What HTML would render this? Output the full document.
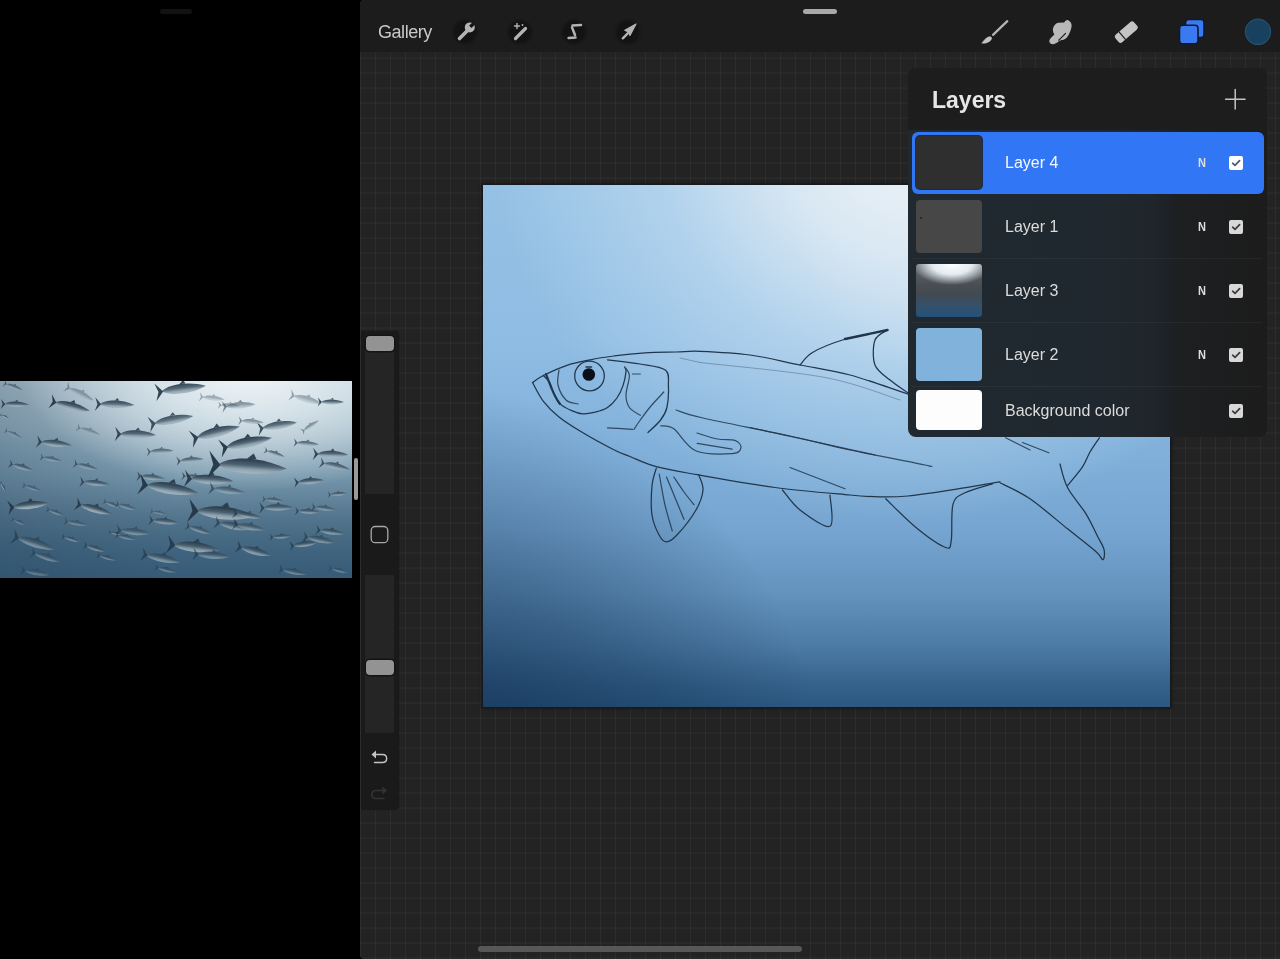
<!DOCTYPE html>
<html><head><meta charset="utf-8">
<style>
*{margin:0;padding:0;box-sizing:border-box}
html,body{width:1280px;height:959px;overflow:hidden;background:#000;font-family:"Liberation Sans",sans-serif}
#app,#layers{will-change:transform}
.abs{position:absolute}
#lefthandle{left:160px;top:9px;width:32px;height:5px;border-radius:3px;background:#121212}
#photo{left:0;top:381px;width:352px;height:197px;overflow:hidden;
 background:radial-gradient(ellipse 230px 120px at 250px -10px,#f1f5f6 0%,rgba(225,235,240,.85) 35%,rgba(180,200,212,0) 100%),linear-gradient(90deg,rgba(40,70,95,.3) 0%,rgba(40,70,95,.12) 30%,rgba(40,70,95,0) 50%),linear-gradient(180deg,#b3c8d3 0%,#98b2c1 25%,#7596ab 48%,#52748c 70%,#40647f 86%,#365b78 100%)}
#divider{left:354px;top:458px;width:4px;height:42px;border-radius:2px;background:#9a9a9a}
#app{left:360px;top:0;width:920px;height:959px;border-radius:4px 0 0 4px;overflow:hidden;
 background-color:#232323;
 background-image:linear-gradient(90deg,rgba(255,255,255,.042) 0px,rgba(255,255,255,.042) 1.5px,rgba(255,255,255,0) 1.5px),linear-gradient(180deg,rgba(255,255,255,.042) 0px,rgba(255,255,255,.042) 1.5px,rgba(255,255,255,0) 1.5px);
 background-size:15px 15px;
 background-position:0px 12.6px}
#toolbar{left:0;top:0;width:920px;height:52px;background:#1c1c1c}
#gallery{left:18px;top:22px;font-size:18px;color:#c8c8c8;letter-spacing:-0.45px}
.icirc{width:28px;height:28px;border-radius:50%;background:radial-gradient(circle,#131313 50%,rgba(19,19,19,0) 71%)}
#righthandle{left:443px;top:9px;width:34px;height:5px;border-radius:3px;background:#a8a8a8}
#home{left:118px;top:946px;width:324px;height:6px;border-radius:3px;background:#575757}
#canvas{left:123px;top:185px;width:687px;height:522px;overflow:hidden;box-shadow:0 0 0 1px #161a1f, 0 0 3px 1px rgba(0,0,0,.6);
 background:
 radial-gradient(ellipse 410px 390px at 420px -50px,rgba(238,243,247,1) 0%,rgba(226,237,245,.86) 30%,rgba(205,228,244,.5) 60%,rgba(170,205,235,0) 100%),
 radial-gradient(ellipse 260px 260px at 560px -20px,rgba(232,238,242,.9) 0%,rgba(220,232,240,.5) 45%,rgba(200,220,235,0) 100%),
 radial-gradient(ellipse 400px 400px at -60px 600px,rgba(20,50,85,.85) 0%,rgba(20,50,85,.45) 50%,rgba(20,50,85,0) 100%),
 linear-gradient(180deg,#95c1e5 0%,#8fbce3 30%,#80b0da 52%,#75a5d0 66%,#6494be 78%,#4d7ca6 88%,#34618a 96%,#2b5880 100%)}
#sidebar{left:1px;top:331px;width:36.5px;height:478.5px;background:#1a1a1a;border-radius:0 4px 4px 0;box-shadow:1px 0 1px rgba(0,0,0,.35)}
.track{left:4px;width:29px;background:#252525;border-radius:1px}
.knob{left:4.5px;width:28px;height:15px;border-radius:4px;background:#939393;box-shadow:0 0 0 1.5px #141414}
#layers{left:548px;top:68px;width:359px;height:369px;border-radius:8px;overflow:hidden}
#lrows{left:0;top:62px;width:359px;height:307px;background:linear-gradient(90deg,#212930 0%,#20282f 50%,#1f252b 68%,#1d1f21 76%,#1c1c1c 100%)}
#lhead{left:0;top:0;width:359px;height:62px;background:rgba(29,29,29,.9)}
#ltitle{left:24px;top:19px;font-size:23px;font-weight:bold;color:#e6e6e6}
.row{left:4px;width:352px;height:62px}
.row.sel{background:#3176f5;border-radius:6px}
.thumb{left:4px;top:4px;width:66px;height:53px;border-radius:4px}
.lname{left:93px;top:22px;font-size:16px;color:#dcdcdc}
.lN{left:286px;top:24px;font-size:12px;font-weight:bold;color:#dedede;transform:scaleX(.92);transform-origin:left}
.cb{left:317px;top:24px;width:14px;height:14px;border-radius:2px;background:#d8d8d8}
.sep{left:4px;width:350px;height:1px;background:rgba(255,255,255,.045)}
</style></head><body>
<div id="lefthandle" class="abs"></div>
<div id="photo" class="abs"><svg class="abs" style="left:0;top:0" width="352" height="197" viewBox="0 0 352 197">
<defs><linearGradient id="fg" x1="0" y1="0" x2="0" y2="1"><stop offset="0" stop-color="#223444"/><stop offset=".45" stop-color="#4a5f6e"/><stop offset=".72" stop-color="#8ea2ae"/><stop offset="1" stop-color="#a9b9c3"/></linearGradient><g id="tf"><path d="M15 0 C28 -13 70 -14 100 -1 C74 11 32 11 15 0 Z" fill="url(#fg)"/><path d="M18 0 L3 -17 L9 0 L3 17 Z" fill="#243646"/><path d="M50 -10 L58 -17 L62 -10 Z" fill="#2a3c4c"/></g></defs>
<use href="#tf" transform="translate(49.0 19.9) rotate(14.3) scale(0.420)" opacity="0.95"/>
<use href="#tf" transform="translate(0.0 23.0) rotate(2.0) scale(0.292)" opacity="0.87"/>
<use href="#tf" transform="translate(0.0 33.4) rotate(24.1) scale(0.103)" opacity="0.87"/>
<use href="#tf" transform="translate(35.5 60.5) rotate(6.6) scale(0.367)" opacity="0.83"/>
<use href="#tf" transform="translate(93.8 23.0) rotate(2.1) scale(0.407)" opacity="0.87"/>
<use href="#tf" transform="translate(8.3 82.4) rotate(16.2) scale(0.261)" opacity="0.71"/>
<use href="#tf" transform="translate(39.6 76.0) rotate(11.1) scale(0.223)" opacity="0.59"/>
<use href="#tf" transform="translate(73.0 82.4) rotate(14.1) scale(0.258)" opacity="0.67"/>
<use href="#tf" transform="translate(4.2 49.0) rotate(25.4) scale(0.196)" opacity="0.47"/>
<use href="#tf" transform="translate(113.7 53.0) rotate(1.8) scale(0.422)" opacity="0.87"/>
<use href="#tf" transform="translate(64.7 5.0) rotate(27.1) scale(0.327)" opacity="0.39"/>
<use href="#tf" transform="translate(76.0 46.0) rotate(18.4) scale(0.253)" opacity="0.39"/>
<use href="#tf" transform="translate(3.0 2.0) rotate(20.3) scale(0.213)" opacity="0.63"/>
<use href="#tf" transform="translate(153.8 11.5) rotate(-6.8) scale(0.526)" opacity="0.91"/>
<use href="#tf" transform="translate(147.5 43.8) rotate(-10.2) scale(0.466)" opacity="0.83"/>
<use href="#tf" transform="translate(189.3 58.4) rotate(-13.7) scale(0.522)" opacity="0.91"/>
<use href="#tf" transform="translate(146.0 71.0) rotate(-2.1) scale(0.276)" opacity="0.63"/>
<use href="#tf" transform="translate(175.7 80.3) rotate(-4.3) scale(0.282)" opacity="0.71"/>
<use href="#tf" transform="translate(206.0 83.0) rotate(4.0) scale(0.809)" opacity="0.95"/>
<use href="#tf" transform="translate(218.4 67.8) rotate(-11.0) scale(0.546)" opacity="0.95"/>
<use href="#tf" transform="translate(198.6 15.7) rotate(6.8) scale(0.263)" opacity="0.39"/>
<use href="#tf" transform="translate(217.4 24.0) rotate(2.5) scale(0.226)" opacity="0.43"/>
<use href="#tf" transform="translate(136.0 95.0) rotate(5.9) scale(0.292)" opacity="0.71"/>
<use href="#tf" transform="translate(181.0 95.0) rotate(4.6) scale(0.251)" opacity="0.71"/>
<use href="#tf" transform="translate(221.0 26.0) rotate(-4.1) scale(0.346)" opacity="0.51"/>
<use href="#tf" transform="translate(317.0 21.0) rotate(0.8) scale(0.270)" opacity="0.87"/>
<use href="#tf" transform="translate(288.8 13.6) rotate(15.8) scale(0.345)" opacity="0.39"/>
<use href="#tf" transform="translate(256.5 48.0) rotate(-8.7) scale(0.410)" opacity="0.83"/>
<use href="#tf" transform="translate(237.7 39.7) rotate(4.6) scale(0.262)" opacity="0.51"/>
<use href="#tf" transform="translate(301.3 51.0) rotate(-32.6) scale(0.210)" opacity="0.51"/>
<use href="#tf" transform="translate(293.0 61.6) rotate(4.6) scale(0.261)" opacity="0.71"/>
<use href="#tf" transform="translate(311.8 73.0) rotate(1.6) scale(0.365)" opacity="0.87"/>
<use href="#tf" transform="translate(263.8 69.0) rotate(18.5) scale(0.220)" opacity="0.71"/>
<use href="#tf" transform="translate(319.0 81.4) rotate(13.3) scale(0.318)" opacity="0.75"/>
<use href="#tf" transform="translate(6.6 126.9) rotate(-5.9) scale(0.429)" opacity="0.95"/>
<use href="#tf" transform="translate(21.9 103.9) rotate(18.3) scale(0.207)" opacity="0.51"/>
<use href="#tf" transform="translate(78.9 100.6) rotate(6.2) scale(0.308)" opacity="0.75"/>
<use href="#tf" transform="translate(74.5 122.5) rotate(16.3) scale(0.388)" opacity="0.91"/>
<use href="#tf" transform="translate(46.0 128.0) rotate(20.4) scale(0.187)" opacity="0.59"/>
<use href="#tf" transform="translate(63.5 140.0) rotate(10.3) scale(0.245)" opacity="0.51"/>
<use href="#tf" transform="translate(103.0 120.0) rotate(22.4) scale(0.184)" opacity="0.63"/>
<use href="#tf" transform="translate(11.0 155.0) rotate(17.7) scale(0.462)" opacity="0.63"/>
<use href="#tf" transform="translate(30.0 171.0) rotate(18.4) scale(0.316)" opacity="0.55"/>
<use href="#tf" transform="translate(61.3 155.3) rotate(16.4) scale(0.195)" opacity="0.63"/>
<use href="#tf" transform="translate(83.2 164.0) rotate(17.1) scale(0.228)" opacity="0.63"/>
<use href="#tf" transform="translate(96.4 174.0) rotate(15.4) scale(0.203)" opacity="0.59"/>
<use href="#tf" transform="translate(0.0 100.6) rotate(60.7) scale(0.112)" opacity="0.79"/>
<use href="#tf" transform="translate(11.0 137.8) rotate(23.3) scale(0.167)" opacity="0.51"/>
<use href="#tf" transform="translate(108.4 151.0) rotate(12.4) scale(0.139)" opacity="0.71"/>
<use href="#tf" transform="translate(20.0 189.0) rotate(9.5) scale(0.304)" opacity="0.43"/>
<use href="#tf" transform="translate(137.0 102.8) rotate(9.1) scale(0.620)" opacity="0.95"/>
<use href="#tf" transform="translate(183.0 97.3) rotate(3.8) scale(0.504)" opacity="0.91"/>
<use href="#tf" transform="translate(186.2 129.0) rotate(5.8) scale(0.692)" opacity="0.95"/>
<use href="#tf" transform="translate(115.0 122.5) rotate(16.5) scale(0.229)" opacity="0.55"/>
<use href="#tf" transform="translate(147.9 139.0) rotate(6.0) scale(0.308)" opacity="0.71"/>
<use href="#tf" transform="translate(150.0 130.0) rotate(11.6) scale(0.168)" opacity="0.51"/>
<use href="#tf" transform="translate(115.0 149.0) rotate(6.3) scale(0.362)" opacity="0.59"/>
<use href="#tf" transform="translate(115.0 154.0) rotate(12.5) scale(0.213)" opacity="0.55"/>
<use href="#tf" transform="translate(165.4 163.0) rotate(6.9) scale(0.550)" opacity="0.87"/>
<use href="#tf" transform="translate(140.2 172.9) rotate(12.1) scale(0.414)" opacity="0.67"/>
<use href="#tf" transform="translate(185.0 144.4) rotate(18.2) scale(0.278)" opacity="0.63"/>
<use href="#tf" transform="translate(213.6 141.0) rotate(12.4) scale(0.373)" opacity="0.67"/>
<use href="#tf" transform="translate(154.4 186.0) rotate(14.1) scale(0.226)" opacity="0.55"/>
<use href="#tf" transform="translate(191.7 172.9) rotate(4.8) scale(0.384)" opacity="0.59"/>
<use href="#tf" transform="translate(208.0 107.0) rotate(7.7) scale(0.373)" opacity="0.63"/>
<use href="#tf" transform="translate(293.3 101.7) rotate(-4.1) scale(0.308)" opacity="0.87"/>
<use href="#tf" transform="translate(258.3 126.9) rotate(0.0) scale(0.350)" opacity="0.75"/>
<use href="#tf" transform="translate(294.4 130.0) rotate(2.7) scale(0.252)" opacity="0.71"/>
<use href="#tf" transform="translate(310.9 125.8) rotate(7.3) scale(0.253)" opacity="0.63"/>
<use href="#tf" transform="translate(327.3 113.7) rotate(-3.2) scale(0.197)" opacity="0.67"/>
<use href="#tf" transform="translate(261.6 118.0) rotate(6.0) scale(0.220)" opacity="0.55"/>
<use href="#tf" transform="translate(232.0 132.0) rotate(9.5) scale(0.304)" opacity="0.71"/>
<use href="#tf" transform="translate(232.0 143.0) rotate(10.3) scale(0.335)" opacity="0.63"/>
<use href="#tf" transform="translate(269.2 156.4) rotate(-2.9) scale(0.218)" opacity="0.71"/>
<use href="#tf" transform="translate(289.0 165.2) rotate(-6.4) scale(0.286)" opacity="0.75"/>
<use href="#tf" transform="translate(315.2 148.8) rotate(8.1) scale(0.299)" opacity="0.75"/>
<use href="#tf" transform="translate(302.0 155.3) rotate(11.5) scale(0.337)" opacity="0.63"/>
<use href="#tf" transform="translate(235.3 165.2) rotate(15.2) scale(0.374)" opacity="0.75"/>
<use href="#tf" transform="translate(278.0 188.0) rotate(11.3) scale(0.291)" opacity="0.55"/>
<use href="#tf" transform="translate(328.4 187.0) rotate(12.9) scale(0.201)" opacity="0.51"/>
</svg></div>
<div id="divider" class="abs"></div>
<div id="app" class="abs">
  <div id="toolbar" class="abs"></div>
  <div id="gallery" class="abs">Gallery</div>
  <div class="abs icirc" style="left:91px;top:18px"></div>
  <div class="abs icirc" style="left:146px;top:18px"></div>
  <div class="abs icirc" style="left:200px;top:18px"></div>
  <div class="abs icirc" style="left:254px;top:18px"></div>
  <div id="righthandle" class="abs"></div>
  <div id="canvas" class="abs"><svg class="abs" style="left:0;top:0" width="687" height="522" viewBox="483 185 687 522">
<g fill="none" stroke="#21364b" stroke-linecap="round" stroke-linejoin="round">
<path d="M532.5 382.5 C534.3 381.3 537.7 378.4 543.4 375.5 C549.1 372.6 559.1 367.9 566.9 365.3 C574.7 362.7 582.5 361.4 590.3 359.8 C598.1 358.2 604.7 357.2 613.8 356.0 C622.9 354.8 634.6 353.5 645.0 352.8 C655.4 352.1 667.1 352.2 676.3 352.0 C685.5 351.8 687.7 350.8 700.0 351.3 C712.3 351.8 733.3 352.7 750.0 355.0 C766.7 357.3 783.3 361.7 800.0 365.0 C816.7 368.3 832.1 370.2 850.0 375.0 C867.9 379.8 894.2 389.6 907.5 393.8 C920.8 398.0 926.2 399.0 930.0 400.0" stroke-width="1.25"/>
<path d="M532.5 382.5 C534.3 385.6 539.0 395.6 543.4 401.3 C547.8 407.0 552.5 411.7 559.0 416.9 C565.5 422.1 573.4 427.0 582.5 432.5 C591.6 438.0 605.9 445.7 613.8 449.7 C621.7 453.7 622.9 453.7 630.0 456.5 C637.1 459.3 645.1 463.7 656.3 466.7 C667.5 469.7 677.4 471.2 697.2 474.7 C717.0 478.2 749.5 484.1 775.0 487.5 C800.5 490.9 832.5 493.4 850.0 495.0 C867.5 496.6 870.3 496.7 880.0 496.9 C889.7 497.1 895.5 497.2 908.0 496.0 C920.5 494.8 939.7 491.8 955.0 489.4 C970.3 487.0 992.5 483.1 1000.0 481.9" stroke-width="1.25"/>
<path d="M1000.0 482.8 C1005.0 485.5 1018.8 491.1 1030.0 498.8 C1041.2 506.5 1056.6 520.0 1067.5 528.8 C1078.4 537.5 1089.7 546.1 1095.6 551.3 C1101.5 556.4 1101.6 560.0 1103.0 559.7 C1104.4 559.4 1104.9 553.3 1104.0 549.4 C1103.1 545.5 1100.5 542.2 1097.5 536.3 C1094.5 530.4 1091.0 521.9 1086.0 513.8 C1081.0 505.7 1071.8 495.8 1067.5 487.5 C1063.2 479.2 1061.2 467.9 1060.0 464.0" stroke-width="1.25"/>
<path d="M1067.5 485.6 C1070.0 482.5 1078.8 472.5 1082.5 466.9 C1086.2 461.3 1087.2 456.9 1090.0 452.0 C1092.8 447.1 1097.8 440.2 1099.4 437.8" stroke-width="1.25"/>
<path d="M885.6 498.8 C890.9 503.8 907.5 520.7 917.5 528.8 C927.5 536.9 940.0 545.6 945.6 547.5 C951.2 549.4 950.1 547.2 951.3 540.0 C952.5 532.8 950.8 512.2 953.0 504.4 C955.2 496.6 957.8 496.4 964.4 493.0 C971.0 489.6 987.8 485.3 992.5 483.8" stroke-width="1.25"/>
<path d="M656.3 468.2 C655.6 471.1 652.7 477.9 652.0 485.7 C651.3 493.5 650.8 506.7 652.0 515.0 C653.2 523.3 656.8 530.8 659.2 535.3 C661.6 539.8 663.6 541.9 666.5 541.9 C669.4 541.9 671.8 540.5 676.7 535.3 C681.6 530.1 691.3 518.0 695.7 510.5 C700.1 502.9 702.5 496.0 703.0 490.0 C703.5 484.0 699.3 477.2 698.6 474.7" stroke-width="1.25"/>
<path d="M782.5 490.0 C785.4 493.3 792.1 503.9 800.0 510.0 C807.9 516.0 825.0 528.8 830.0 526.3 C835.0 523.8 830.0 500.2 830.0 495.0" stroke-width="1.25"/>
<path d="M800.0 365.0 C802.1 362.9 805.4 356.7 812.5 352.5 C819.6 348.3 830.0 343.8 842.5 340.0 C855.0 336.2 880.0 331.7 887.5 330.0" stroke-width="1.25"/>
<path d="M887.5 330.0 C885.4 331.7 877.1 334.2 875.0 340.0 C872.9 345.8 872.5 358.3 875.0 365.0 C877.5 371.7 884.6 375.4 890.0 380.0 C895.4 384.6 904.6 390.4 907.5 392.5" stroke-width="1.25"/>
<path d="M543.4 375.5 C544.5 376.7 547.9 379.2 549.7 382.5 C551.5 385.8 552.6 391.4 554.4 395.0 C556.2 398.6 557.7 401.8 560.6 404.4 C563.5 407.0 568.0 409.0 571.6 410.6 C575.2 412.2 578.6 413.5 582.5 413.8 C586.4 414.1 590.8 413.2 595.0 412.2 C599.2 411.1 603.9 409.9 607.5 407.5 C611.1 405.1 614.3 401.6 616.9 398.0 C619.5 394.4 621.5 390.0 623.0 385.6 C624.5 381.2 625.7 374.7 626.0 371.6 C626.3 368.5 624.9 367.7 624.7 366.9" stroke-width="1.25"/>
<path d="M607.5 359.8 C612.9 360.5 630.4 362.3 640.0 364.0 C649.6 365.7 660.6 366.4 665.3 370.0 C670.0 373.6 668.1 379.4 668.4 385.6 C668.7 391.9 668.2 401.8 666.9 407.5 C665.6 413.2 663.8 415.8 660.6 420.0 C657.5 424.2 650.1 430.4 648.0 432.5" stroke-width="1.25"/>
<path d="M626.0 368.4 C626.6 369.7 629.4 371.6 629.4 376.0 C629.4 380.4 626.0 389.8 626.0 395.0 C626.0 400.2 627.0 404.1 629.4 407.5 C631.8 410.9 638.5 414.0 640.3 415.3" stroke-width="1.2" stroke-opacity=".85"/>
<path d="M663.8 392.0 C661.4 394.6 653.6 402.8 649.7 407.5 C645.8 412.2 642.9 416.4 640.3 420.0 C637.7 423.6 635.0 427.8 634.0 429.4" stroke-width="1.2" stroke-opacity=".85"/>
<path d="M607.5 427.8 L632.5 429.4" stroke-width="1.2" stroke-opacity=".85"/>
<path d="M632.5 374.0 L640.3 374.0" stroke-width="1.2" stroke-opacity=".85"/>
<path d="M559.0 370.0 C558.8 372.5 556.8 380.0 558.0 385.0 C559.2 390.0 562.7 396.8 566.0 400.0 C569.3 403.2 576.0 403.3 578.0 404.0" stroke-width="1.2" stroke-opacity=".85"/>
<path d="M660.7 425.8 C662.9 426.3 668.0 424.7 673.8 428.8 C679.6 432.9 686.0 446.6 695.7 450.7 C705.4 454.8 724.7 454.1 732.2 453.6 C739.8 453.1 740.5 449.9 741.0 447.7 C741.5 445.5 738.9 441.8 735.0 440.4 C731.1 438.9 723.9 440.2 717.6 439.0 C711.3 437.8 700.4 434.0 697.0 433.0" stroke-width="1.2" stroke-opacity=".85"/>
<path d="M697.2 443.4 L732.2 449.2" stroke-width="1.2" stroke-opacity=".85"/>
<path d="M676.0 410.0 C680.5 411.3 684.0 413.7 703.0 418.0 C722.0 422.3 765.5 430.7 790.0 436.0 C814.5 441.3 827.5 445.2 850.0 450.0 C872.5 454.8 911.9 462.3 925.0 465.0 C938.1 467.7 928.2 465.8 928.8 466.0" stroke-width="1.2" stroke-opacity=".85"/>
<path d="M750.0 427.5 L875.0 455.0" stroke-width="1.2" stroke-opacity=".85"/>
<path d="M790.0 467.5 L845.0 488.8" stroke-width="1.2" stroke-opacity=".85"/>
<path d="M659.2 474.0 C660.2 479.2 662.8 495.5 665.0 505.0 C667.2 514.5 671.1 526.7 672.3 531.0" stroke-width="1.2" stroke-opacity=".85"/>
<path d="M666.5 477.0 C668.1 480.8 673.1 492.9 676.0 500.0 C678.9 507.1 682.7 516.1 684.0 519.3" stroke-width="1.2" stroke-opacity=".85"/>
<path d="M673.8 477.0 C675.5 479.5 680.6 487.4 684.0 492.0 C687.4 496.6 692.3 502.6 694.0 504.7" stroke-width="1.2" stroke-opacity=".85"/>
<path d="M1005.6 437.8 L1030.0 450.0" stroke-width="1.2" stroke-opacity=".85"/>
<path d="M1022.5 442.5 L1048.8 452.8" stroke-width="1.2" stroke-opacity=".85"/>
<path d="M700.0 362.5 C720.8 365.0 791.7 371.2 825.0 377.5 C858.3 383.8 887.5 396.2 900.0 400.0" stroke-width="1" stroke-opacity=".35"/>
<path d="M680.0 358.0 L700.0 362.5" stroke-width="1" stroke-opacity=".35"/>
<path d="M845 339 L887.5 330" stroke-width="2.4"/>
<path d="M546 374 C550 384 553 395 560 404" stroke-width="2.1"/>
<circle cx="589.5" cy="376" r="14.8" stroke-width="1.25"/>
<circle cx="588.8" cy="374.5" r="6.3" fill="#0a0f18" stroke="none"/>
<path d="M586 367 L591.5 367" stroke-width="1.5"/>
</g>
</svg></div>
  <div id="sidebar" class="abs">
    <div class="abs track" style="top:5px;height:158px"></div>
    <div class="abs knob" style="top:5px"></div>
    <div class="abs track" style="top:244px;height:158px"></div>
    <div class="abs knob" style="top:329px"></div>
    <svg class="abs" style="left:0;top:0" width="37" height="478" viewBox="361 331 37 478">
      <rect x="371.2" y="526.5" width="16.6" height="16.2" rx="4" fill="none" stroke="#a8a8a8" stroke-width="1.3"/>
      <g fill="none" stroke="#c4c4c4" stroke-width="1.45" stroke-linecap="round" stroke-linejoin="round">
        <path d="M374 754.5 H382.5 C388 754.5 388 762.5 382.5 762.5 H374.5"/>
      </g>
      <path d="M371.5 754.5 L376 750.5 L376 758.5 Z" fill="#c4c4c4"/>
      <g fill="none" stroke="#333" stroke-width="1.6" stroke-linecap="round" stroke-linejoin="round">
        <path d="M384.5 790.5 H376 C370.5 790.5 370.5 798.5 376 798.5 H384"/>
      </g>
      <path d="M387 790.5 L382.5 786.5 L382.5 794.5 Z" fill="#333"/>
    </svg>
  </div>
  <div id="layers" class="abs">
    <div id="lhead" class="abs"></div><div id="lrows" class="abs"></div>
    <div id="ltitle" class="abs">Layers</div>
    <svg class="abs" style="left:316px;top:20px" width="22" height="22" viewBox="0 0 22 22"><path d="M11.2 1.6 V21 M1.6 11.3 H21" stroke="#c4c4c4" stroke-width="1.5" stroke-linecap="round"/></svg>
    <div class="abs row sel" style="top:64px">
      <div class="abs thumb" style="background:#2f2f2f;box-shadow:0 0 0 1px #1a2a4c"></div>
      <div class="abs lname" style="color:#f4f8ff">Layer 4</div>
      <div class="abs lN">N</div>
      <div class="abs cb" style="background:#fff"><svg width="14" height="14" viewBox="0 0 14 14"><path d="M3.6 7.2 L6 9.4 L10.6 4.6" fill="none" stroke="#4a5a70" stroke-width="1.7" stroke-linecap="round" stroke-linejoin="round"/></svg></div>
    </div>
    <div class="abs row" style="top:128px">
      <div class="abs thumb" style="background:#474747"><div class="abs" style="left:4px;top:17px;width:2px;height:2px;border-radius:1px;background:#222"></div></div>
      <div class="abs lname">Layer 1</div>
      <div class="abs lN">N</div>
      <div class="abs cb"><svg width="14" height="14" viewBox="0 0 14 14"><path d="M3.6 7.2 L6 9.4 L10.6 4.6" fill="none" stroke="#3a3a3a" stroke-width="1.7" stroke-linecap="round" stroke-linejoin="round"/></svg></div>
    </div>
    <div class="abs row" style="top:192px">
      <div class="abs thumb" style="border-radius:3px;background:radial-gradient(ellipse 40px 21px at 36px 0px,#ffffff 0%,#e4ebf0 50%,rgba(85,92,98,0) 100%),linear-gradient(180deg,#5f6a70 0%,#4b4f54 38%,#434a51 55%,#34516c 80%,#23517a 100%)"></div>
      <div class="abs lname">Layer 3</div>
      <div class="abs lN">N</div>
      <div class="abs cb"><svg width="14" height="14" viewBox="0 0 14 14"><path d="M3.6 7.2 L6 9.4 L10.6 4.6" fill="none" stroke="#3a3a3a" stroke-width="1.7" stroke-linecap="round" stroke-linejoin="round"/></svg></div>
    </div>
    <div class="abs row" style="top:256px">
      <div class="abs thumb" style="background:#80b2dc"></div>
      <div class="abs lname">Layer 2</div>
      <div class="abs lN">N</div>
      <div class="abs cb"><svg width="14" height="14" viewBox="0 0 14 14"><path d="M3.6 7.2 L6 9.4 L10.6 4.6" fill="none" stroke="#3a3a3a" stroke-width="1.7" stroke-linecap="round" stroke-linejoin="round"/></svg></div>
    </div>
    <div class="abs row" style="top:320px;height:50px">
      <div class="abs thumb" style="top:2px;height:40px;background:#fdfdfd"></div>
      <div class="abs lname" style="top:14px">Background color</div>
      <div class="abs cb" style="top:16px"><svg width="14" height="14" viewBox="0 0 14 14"><path d="M3.6 7.2 L6 9.4 L10.6 4.6" fill="none" stroke="#3a3a3a" stroke-width="1.7" stroke-linecap="round" stroke-linejoin="round"/></svg></div>
    </div>
    <div class="abs sep" style="top:190px"></div>
    <div class="abs sep" style="top:254px"></div>
    <div class="abs sep" style="top:318px"></div>
  </div>
  <div id="home" class="abs"></div>
</div>
<svg class="abs" style="left:0;top:0" width="1280" height="60" viewBox="0 0 1280 60">
 <defs><mask id="wm"><rect x="440" y="0" width="60" height="60" fill="#fff"/><path d="M470.3 26.9 L476 21.2" stroke="#000" stroke-width="3.4" stroke-linecap="butt"/></mask></defs>
 <g fill="none" stroke="#b4b4b4" stroke-linecap="round" stroke-linejoin="round">
  <!-- wrench -->
  <path d="M459.5 38.5 L467.5 30.5" stroke-width="3.6"/>
  <circle cx="469.8" cy="27.4" r="5" fill="#b4b4b4" stroke="none" mask="url(#wm)"/>
  <!-- wand -->
  <path d="M515.5 38.5 L525.5 28.5" stroke-width="3.2"/>
  <path d="M517 23.5 V28.5 M514.5 26 H519.5" stroke-width="1.4"/>
  <circle cx="522.5" cy="25" r="0.9" fill="#b4b4b4" stroke="none"/>
  <!-- selection S -->
  <path d="M572.5 25.6 L581 25.1" stroke-width="2.5"/>
  <path d="M572 27.4 L575 35" stroke-width="2.5"/>
  <path d="M568.5 38 L575.5 37.5" stroke-width="2.5"/>
  <!-- transform arrow -->
  <path d="M622.8 38.3 L629.5 31.6" stroke-width="2.4"/>
  <path d="M636 24 L624.8 30.2 L628.4 31.9 L630 35.6 Z" fill="#b4b4b4" stroke-width="1.1"/>
  <!-- brush -->
  <path d="M993 34.8 L1007.3 21.2" stroke-width="2.3"/>
  <path d="M982.2 43 C983.5 41 985 38.5 988 37.2 C990 36.4 991.8 36.8 991.6 38.4 C991.3 40.3 988.8 42.2 986 42.9 C984.6 43.2 983.2 43.2 982.2 43 Z" fill="#c4c4c4" stroke="#c4c4c4" stroke-width="0.6"/>
  <!-- smudge -->
  <path d="M1050.2 43.2 C1048.6 41.8 1049.3 39.6 1050.8 38.1 L1054.4 34.6 C1052.6 32.2 1052.3 28.6 1054 26 C1055.2 24 1056.6 23 1058.8 22.8 L1064.2 22.4 C1065.2 20.8 1066.6 19.7 1068.2 20.2 C1070.2 21 1072 23.6 1071.6 26.2 C1071.1 29.6 1069.6 33.6 1067.6 36.6 C1066 38.8 1063.8 40.2 1061.6 40 C1060 40.4 1058 42 1055.4 43.6 C1053.6 44.6 1051.4 44.4 1050.2 43.2 Z" fill="#b8b8b8" stroke="none"/>
  <path d="M1065.8 33.2 L1058.4 40.6" stroke="#1c1c1c" stroke-width="1.2" stroke-linecap="butt"/>
  <!-- eraser -->
  <g transform="translate(1126.3 32.1) rotate(-41)" stroke="none">
   <rect x="-12.3" y="-5" width="24.6" height="10" rx="2.9" fill="#c4c4c4"/>
   <rect x="-6" y="-5.2" width="1.2" height="10.4" fill="#1c1c1c"/>
  </g>
 </g>
 <!-- layers icon -->
 <rect x="1185.5" y="19.5" width="18.5" height="18" rx="3" fill="#3b79f0" stroke="#0e1a33" stroke-width="1.6"/>
 <rect x="1179.5" y="25.2" width="18.5" height="18.5" rx="3" fill="#3b79f0" stroke="#0e1a33" stroke-width="1.6"/>
 <circle cx="1258" cy="31.8" r="12.6" fill="#18405f" stroke="#25506f" stroke-width="1.2"/>
</svg>
</body></html>
